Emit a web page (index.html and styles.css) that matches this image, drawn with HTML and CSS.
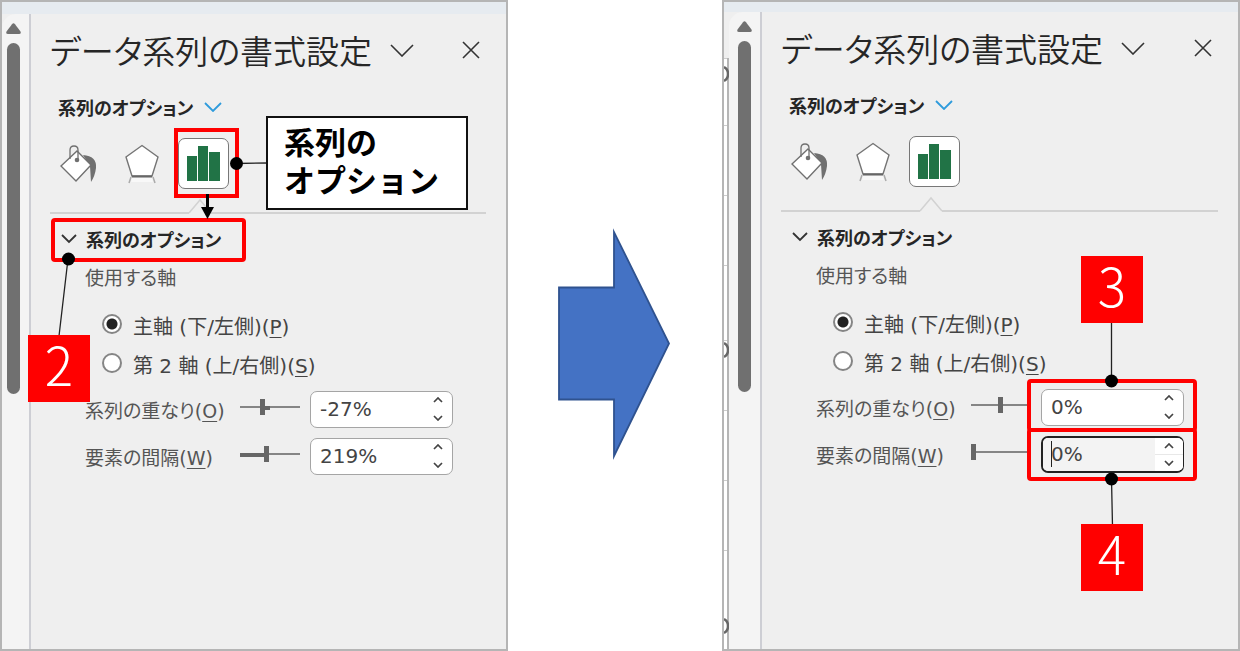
FILE: index.html
```html
<!DOCTYPE html>
<html lang="ja">
<head>
    <meta charset="UTF-8">
    <meta name="viewport" content="width=device-width, initial-scale=1.0">
    <title>データ系列の書式設定</title>
    <link rel="stylesheet" href="styles.css">
</head>
<body>
    <main class="steps">
        <section class="shot shot-before">
            <div class="scrollbar">
                <svg class="scroll-up" width="15" height="11" viewBox="0 0 15 11"><path d="M6 1.2Q7.500 -.5 9 1.200L14.500 8.500Q15.500 11 13 11H2Q-.5 11 .5 8.500Z" fill="#707070"/></svg>
                <div class="scroll-thumb"></div>
            </div>
            <div class="pane">
                <header class="pane-header">
                    <h2>データ系列の書式設定</h2>
                    <button class="icon-button" aria-label="メニュー"><svg width="24" height="13" viewBox="0 0 24 13"><path d="M1 1l11 11L23 1" fill="none" stroke="#333" stroke-width="1.6"/></svg></button>
                    <button class="icon-button close" aria-label="閉じる"><svg width="18" height="18" viewBox="0 0 18 18"><path d="M1 1l16 16M17 1L1 17" fill="none" stroke="#333" stroke-width="1.6"/></svg></button>
                </header>
                <button class="options-menu">系列のオプション <svg width="18" height="10" viewBox="0 0 18 10"><path d="M1 1l8 8 8-8" fill="none" stroke="#2e9bdc" stroke-width="1.8"/></svg></button>
                <div class="tabs">
                    <button class="tab" aria-label="塗りつぶしと線">
                        <svg width="38" height="38" viewBox="0 0 38 38">
                            <path d="M23 10Q37 11 36 23Q35 31 31 37L30 21Z" fill="#707070"/>
                            <path d="M17 6L31 20 16 36 1 21Z" fill="#fff" stroke="#707070" stroke-width="1.4"/>
                            <path d="M10 14V5Q10 1 14 1T18 5V14" fill="none" stroke="#707070" stroke-width="1.3"/>
                            <circle cx="17" cy="15" r="2.300" fill="#707070"/>
                        </svg>
                    </button>
                    <button class="tab" aria-label="効果">
                        <svg width="36" height="40" viewBox="0 0 36 40">
                            <path d="M7 33L5 39M29 33l2 6" stroke="#aaa" stroke-width="1.500"/>
                            <path d="M8 34H28L29 38H7Z" fill="#f8f8f8"/>
                            <path d="M18 1.500L34 13 28 32H8L2 13Z" fill="#fff" stroke="#757575" stroke-width="1.4"/>
                            <path d="M8 32.500H28" stroke="#666" stroke-width="2"/>
                        </svg>
                    </button>
                    <button class="tab tab-active" aria-label="系列のオプション">
                        <svg width="33" height="35" viewBox="0 0 33 35"><path d="M0 10H10V35H0ZM11 0H21V35H11ZM22 6H33V35H22Z" fill="#217346"/></svg>
                    </button>
                </div>
                <div class="divider">
                    <svg width="24" height="16" viewBox="0 0 24 16"><path d="M1 15L12 2 23 15V16H1Z" fill="#efefef"/><path d="M1 15L12 2 23 15" fill="none" stroke="#d2d2d2" stroke-width="1.500"/></svg>
                </div>
                <button class="section-toggle"><svg width="16" height="10" viewBox="0 0 16 10"><path d="M1 1l7 7 7-7" fill="none" stroke="#333" stroke-width="1.8"/></svg>系列のオプション</button>
                <fieldset class="axis">
                    <legend>使用する軸</legend>
                    <label><input type="radio" name="axis1" checked><span>主軸 (下/左側)(<u>P</u>)</span></label>
                    <label><input type="radio" name="axis1"><span>第 2 軸 (上/右側)(<u>S</u>)</span></label>
                </fieldset>
                <div class="field">
                    <label for="overlap1">系列の重なり(<u>O</u>)</label>
                    <input class="slider fill-center" type="range" min="-100" max="100" value="-27" aria-label="系列の重なり">
                    <div class="spinner">
                        <input type="text" id="overlap1" value="-27%">
                        <div class="spin-buttons">
                            <button aria-label="増やす"><svg width="10" height="6" viewBox="0 0 10 6"><path d="M1 5l4-4 4 4" fill="none" stroke="#444" stroke-width="1.700"/></svg></button>
                            <button aria-label="減らす"><svg width="10" height="6" viewBox="0 0 10 6"><path d="M1 1l4 4 4-4" fill="none" stroke="#444" stroke-width="1.700"/></svg></button>
                        </div>
                    </div>
                </div>
                <div class="field">
                    <label for="gap1">要素の間隔(<u>W</u>)</label>
                    <input class="slider fill-left" type="range" min="0" max="500" value="219" aria-label="要素の間隔">
                    <div class="spinner">
                        <input type="text" id="gap1" value="219%">
                        <div class="spin-buttons">
                            <button aria-label="増やす"><svg width="10" height="6" viewBox="0 0 10 6"><path d="M1 5l4-4 4 4" fill="none" stroke="#444" stroke-width="1.700"/></svg></button>
                            <button aria-label="減らす"><svg width="10" height="6" viewBox="0 0 10 6"><path d="M1 1l4 4 4-4" fill="none" stroke="#444" stroke-width="1.700"/></svg></button>
                        </div>
                    </div>
                </div>
            </div>

            <!-- annotations -->
            <svg class="marks" width="508" height="600" viewBox="0 0 508 600">
                <g fill="none" stroke="#f00" stroke-width="4">
                    <rect x="176" y="130" width="61" height="66"/>
                    <rect x="53" y="220" width="191" height="40" rx="2"/>
                </g>
                <path d="M236 163.500L268 163M68 259L59 336" stroke="#222" stroke-width="1.3"/>
                <path d="M207.500 194V209" stroke="#000" stroke-width="3"/>
                <path d="M201 207H214L207.500 219Z"/>
                <circle cx="236.500" cy="163.500" r="6.500"/>
                <circle cx="68.500" cy="259" r="6.500"/>
            </svg>
            <div class="callout">系列の<br>オプション</div>
            <div class="badge badge-2">2</div>
        </section>

        <svg class="arrow" width="114" height="232" viewBox="0 0 114 232"><path d="M1 59.500H56V4L111 115.500 56 228V171.500H1Z" fill="#4472c4" stroke="#2f528f" stroke-width="1.800" stroke-miterlimit="8"/></svg>

        <section class="shot shot-after">
            <svg class="sheet-edge" width="5" height="647" viewBox="0 0 5 647">
                <path d="M0 56H5V647H0Z" fill="#fff"/>
                <path d="M0 56.500H4M0 123.500H4M0 193.500H4M0 263.500H4M0 338.500H4M0 408.500H4M0 478.500H4M0 548.500H4" stroke="#ccc"/>
                <path d="M4 56V647" stroke="#b5b5b5" stroke-width="2"/>
                <path d="M0 65q4 2 4 7t-4 7M0 341q4 2 4 7t-4 7M0 617q4 2 4 7t-4 7" fill="none" stroke="#666" stroke-width="2.500"/>
            </svg>
            <div class="scrollbar">
                <svg class="scroll-up" width="15" height="11" viewBox="0 0 15 11"><path d="M6 1.2Q7.500 -.5 9 1.200L14.500 8.500Q15.500 11 13 11H2Q-.5 11 .5 8.500Z" fill="#707070"/></svg>
                <div class="scroll-thumb"></div>
            </div>
            <div class="pane">
                <header class="pane-header">
                    <h2>データ系列の書式設定</h2>
                    <button class="icon-button" aria-label="メニュー"><svg width="24" height="13" viewBox="0 0 24 13"><path d="M1 1l11 11L23 1" fill="none" stroke="#333" stroke-width="1.6"/></svg></button>
                    <button class="icon-button close" aria-label="閉じる"><svg width="18" height="18" viewBox="0 0 18 18"><path d="M1 1l16 16M17 1L1 17" fill="none" stroke="#333" stroke-width="1.6"/></svg></button>
                </header>
                <button class="options-menu">系列のオプション <svg width="18" height="10" viewBox="0 0 18 10"><path d="M1 1l8 8 8-8" fill="none" stroke="#2e9bdc" stroke-width="1.8"/></svg></button>
                <div class="tabs">
                    <button class="tab" aria-label="塗りつぶしと線">
                        <svg width="38" height="38" viewBox="0 0 38 38">
                            <path d="M23 10Q37 11 36 23Q35 31 31 37L30 21Z" fill="#707070"/>
                            <path d="M17 6L31 20 16 36 1 21Z" fill="#fff" stroke="#707070" stroke-width="1.4"/>
                            <path d="M10 14V5Q10 1 14 1T18 5V14" fill="none" stroke="#707070" stroke-width="1.3"/>
                            <circle cx="17" cy="15" r="2.300" fill="#707070"/>
                        </svg>
                    </button>
                    <button class="tab" aria-label="効果">
                        <svg width="36" height="40" viewBox="0 0 36 40">
                            <path d="M7 33L5 39M29 33l2 6" stroke="#aaa" stroke-width="1.500"/>
                            <path d="M8 34H28L29 38H7Z" fill="#f8f8f8"/>
                            <path d="M18 1.500L34 13 28 32H8L2 13Z" fill="#fff" stroke="#757575" stroke-width="1.4"/>
                            <path d="M8 32.500H28" stroke="#666" stroke-width="2"/>
                        </svg>
                    </button>
                    <button class="tab tab-active" aria-label="系列のオプション">
                        <svg width="33" height="35" viewBox="0 0 33 35"><path d="M0 10H10V35H0ZM11 0H21V35H11ZM22 6H33V35H22Z" fill="#217346"/></svg>
                    </button>
                </div>
                <div class="divider">
                    <svg width="24" height="16" viewBox="0 0 24 16"><path d="M1 15L12 2 23 15V16H1Z" fill="#efefef"/><path d="M1 15L12 2 23 15" fill="none" stroke="#d2d2d2" stroke-width="1.500"/></svg>
                </div>
                <button class="section-toggle"><svg width="16" height="10" viewBox="0 0 16 10"><path d="M1 1l7 7 7-7" fill="none" stroke="#333" stroke-width="1.8"/></svg>系列のオプション</button>
                <fieldset class="axis">
                    <legend>使用する軸</legend>
                    <label><input type="radio" name="axis2" checked><span>主軸 (下/左側)(<u>P</u>)</span></label>
                    <label><input type="radio" name="axis2"><span>第 2 軸 (上/右側)(<u>S</u>)</span></label>
                </fieldset>
                <div class="field">
                    <label for="overlap2">系列の重なり(<u>O</u>)</label>
                    <input class="slider" type="range" min="-100" max="100" value="0" aria-label="系列の重なり">
                    <div class="spinner">
                        <input type="text" id="overlap2" value="0%">
                        <div class="spin-buttons">
                            <button aria-label="増やす"><svg width="10" height="6" viewBox="0 0 10 6"><path d="M1 5l4-4 4 4" fill="none" stroke="#444" stroke-width="1.700"/></svg></button>
                            <button aria-label="減らす"><svg width="10" height="6" viewBox="0 0 10 6"><path d="M1 1l4 4 4-4" fill="none" stroke="#444" stroke-width="1.700"/></svg></button>
                        </div>
                    </div>
                </div>
                <div class="field">
                    <label for="gap2">要素の間隔(<u>W</u>)</label>
                    <input class="slider" type="range" min="0" max="500" value="0" aria-label="要素の間隔">
                    <div class="spinner spinner-active">
                        <input type="text" id="gap2" value="0%">
                        <div class="spin-buttons">
                            <button aria-label="増やす"><svg width="10" height="6" viewBox="0 0 10 6"><path d="M1 5l4-4 4 4" fill="none" stroke="#444" stroke-width="1.700"/></svg></button>
                            <button aria-label="減らす"><svg width="10" height="6" viewBox="0 0 10 6"><path d="M1 1l4 4 4-4" fill="none" stroke="#444" stroke-width="1.700"/></svg></button>
                        </div>
                    </div>
                </div>
            </div>

            <!-- annotations -->
            <svg class="marks" width="518" height="600" viewBox="0 0 518 600">
                <g fill="none" stroke="#f00" stroke-width="4">
                    <rect x="307" y="381" width="166" height="49" rx="2"/>
                    <rect x="307" y="430" width="166" height="49" rx="2"/>
                </g>
                <path d="M389.500 320V381M389.500 479L390.500 526" stroke="#222" stroke-width="1.3"/>
                <circle cx="389.500" cy="381" r="6.500"/>
                <circle cx="389.500" cy="479" r="6.500"/>
            </svg>
            <div class="badge badge-3">3</div>
            <div class="badge badge-4">4</div>
        </section>
    </main>
</body>
</html>
```
FILE: styles.css
```css
* {
    box-sizing: border-box;
}
body {
    margin: 0;
    background: #fff;
    color: #444;
    font-family: "DejaVu Sans", "Noto Sans CJK JP", sans-serif;
    font-size: 19px;
}
button {
    padding: 0;
    border: none;
    background: none;
    color: inherit;
    font: inherit;
    cursor: pointer;
}
svg {
    display: block;
    flex: none;
}
u {
    text-underline-offset: 3px;
    text-decoration-thickness: 1px;
}
.steps {
    display: flex;
    justify-content: space-between;
    min-height: 100vh;
}
.shot {
    position: relative;
    display: flex;
    border: 2px solid #b5b5b5;
    background: linear-gradient(#e6ebf0 12px, #efefef 12px);
}
.shot-before {
    flex: 0 0 41%;
    padding-top: 12px;
}
.shot-after {
    flex: 0 0 518px;
    padding-top: 10px;
    background: linear-gradient(#e6ebf0 10px, #efefef 10px);
}
.arrow {
    align-self: center;
    margin: 36px 0 0;
}

/* scrollbar */
.sheet-edge {
    margin-top: -10px;
}
.scrollbar {
    display: flex;
    flex-direction: column;
    align-items: flex-end;
    flex: none;
    width: 29px;
    padding: 9px 8px 0 0;
    background: #f4f4f4;
    border-right: 2px solid #cdced4;
    border-radius: 14px 0 0 0;
}
.shot-after .scrollbar {
    width: 33px;
}
.scroll-thumb {
    width: 13px;
    height: 351px;
    margin: 9px 1px 0 0;
    border-radius: 7px;
    background: #707070;
}

/* format pane */
.pane {
    flex: 1;
    min-width: 0;
    padding: 12px 20px 0 19px;
    font-feature-settings: "palt";
}
.pane-header {
    display: flex;
    align-items: center;
    height: 48px;
}
.pane-header h2 {
    margin: 0;
    color: #262626;
    font-family: "Noto Sans CJK JP", sans-serif;
    font-size: 33px;
    font-weight: 350;
    line-height: 48px;
    white-space: nowrap;
}
.icon-button {
    margin-left: 18px;
}
.icon-button.close {
    margin: 0 6px 0 auto;
}
.options-menu, .section-toggle {
    display: flex;
    align-items: center;
    height: 30px;
    color: #262626;
    font-size: 18px;
    font-weight: 700;
}
.options-menu {
    gap: 11px;
    margin: 18px 0 0 8px;
}
.section-toggle {
    gap: 9px;
    margin: 10px 0 0 11px;
}
.tabs {
    display: flex;
    align-items: center;
    gap: 26px;
    margin: 16px 0 0 10px;
}
.tab-active {
    display: flex;
    align-items: center;
    justify-content: center;
    width: 51px;
    height: 51px;
    margin-left: -8px;
    border: 1px solid #777;
    border-radius: 7px;
    background: #fff;
}
.divider {
    height: 16px;
    margin-top: 9px;
    padding-left: 138px;
    border-bottom: 2px solid #d2d2d2;
}
.axis {
    margin: 9px 0 7px 35px;
    padding: 0;
    border: none;
}
.axis legend {
    height: 30px;
    margin-bottom: 13px;
    padding: 0;
    color: #555;
    line-height: 30px;
}
.axis label {
    display: flex;
    align-items: center;
    gap: 11px;
    height: 39px;
    margin-left: 17px;
    font-size: 20px;
}
.axis input {
    appearance: none;
    width: 20px;
    height: 20px;
    margin: 0 0 3px;
    border: 2px solid #858585;
    border-radius: 50%;
    background: #fff;
}
.axis input:checked {
    background: radial-gradient(#222 5px, #fff 6px);
}
.field {
    display: flex;
    align-items: center;
    height: 36px;
    margin: 0 0 11px 35px;
}
.field label {
    width: 155px;
    color: #555;
    white-space: nowrap;
}
.slider {
    appearance: none;
    width: 60px;
    height: 16px;
    margin: 0 10px 4px 0;
    background: linear-gradient(#858585, #858585) center / 100% 2px no-repeat;
}
.slider.fill-center {
    background: linear-gradient(#666, #666) 25px 7px / 5px 4px no-repeat, linear-gradient(#858585, #858585) center / 100% 2px no-repeat;
}
.slider.fill-left {
    background: linear-gradient(#666, #666) 0 7px / 26px 4px no-repeat, linear-gradient(#858585, #858585) center / 100% 2px no-repeat;
}
.slider::-webkit-slider-thumb {
    appearance: none;
    width: 5px;
    height: 16px;
    background: #666;
}
.spinner {
    display: flex;
    width: 143px;
    height: 37px;
    overflow: hidden;
    border: 1px solid #a5a5a5;
    border-radius: 7px;
    background: #fff;
}
.spinner input {
    flex: 1;
    min-width: 0;
    padding: 0 0 0 9px;
    border: none;
    background: none;
    color: #444;
    font: inherit;
    font-size: 20px;
}
.spin-buttons {
    display: flex;
    flex-direction: column;
    width: 28px;
}
.spin-buttons button {
    display: flex;
    flex: 1;
    align-items: center;
    justify-content: center;
}
.spinner-active {
    border: 2px solid #222;
    border-right-width: 1px;
}
.spinner-active input {
    padding-left: 8px;
    background: linear-gradient(#222, #222) 8px 3px / 1px 26px no-repeat #f3f3f3;
}
.spinner-active .spin-buttons {
    background: #fff;
}
.spinner-active .spin-buttons button + button {
    border-top: 1px solid #e8e8e8;
}

/* annotations lie over the panes */
.marks {
    position: absolute;
    top: -2px;
    left: -2px;
    pointer-events: none;
}
.callout {
    position: absolute;
    top: 114px;
    left: 264px;
    width: 202px;
    padding: 4px 16px 10px;
    border: 2px solid #111;
    background: #fff;
    color: #000;
    font-family: "Noto Sans CJK JP", sans-serif;
    font-size: 31px;
    font-weight: 700;
    line-height: 38px;
}
.badge {
    position: absolute;
    width: 62px;
    height: 67px;
    background: #f00;
    color: #fff;
    font-family: "Noto Sans CJK JP", sans-serif;
    font-size: 53px;
    font-weight: 300;
    line-height: 56px;
    text-align: center;
}
.badge-2 {
    top: 333px;
    left: 26px;
}
.badge-3 {
    top: 254px;
    left: 357px;
}
.badge-4 {
    top: 522px;
    left: 357px;
}
```
